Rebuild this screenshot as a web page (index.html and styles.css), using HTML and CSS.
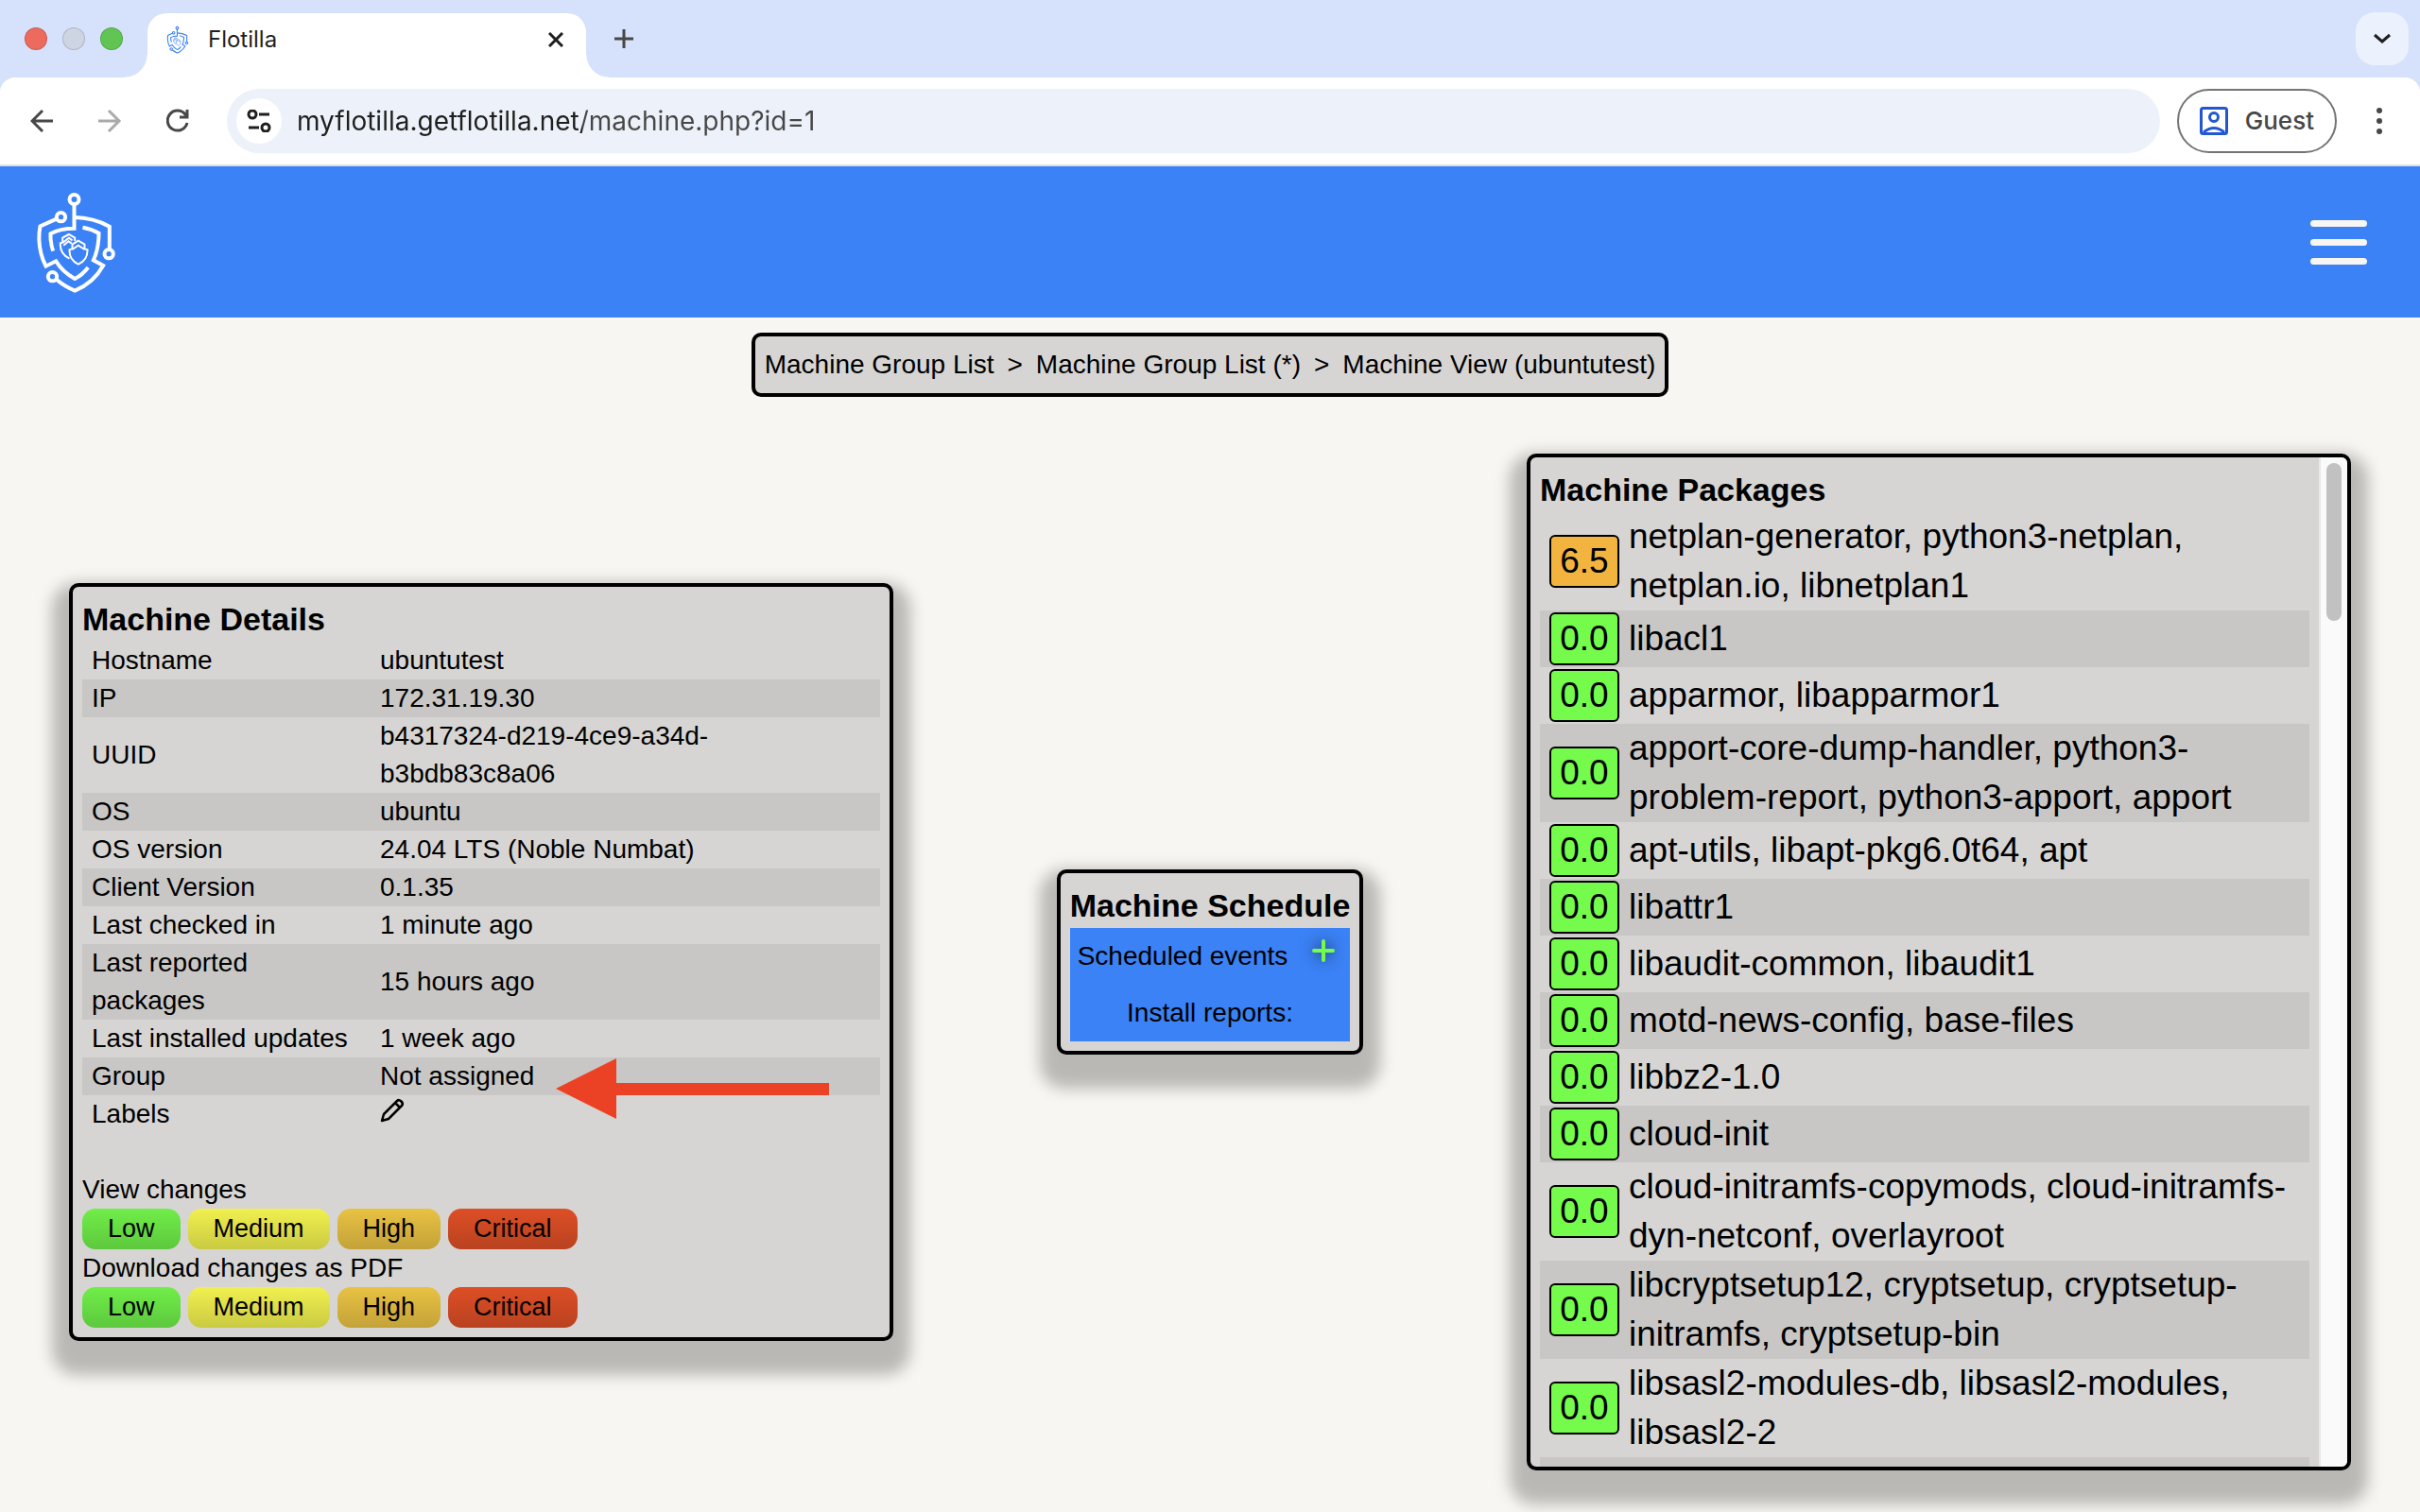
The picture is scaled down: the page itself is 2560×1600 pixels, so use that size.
FILE: index.html
```html
<!DOCTYPE html>
<html lang="en">
<head>
<meta charset="utf-8">
<title>Flotilla</title>
<link rel="stylesheet" href="styles.css">
</head>
<body>
<svg class="symbols" aria-hidden="true">
  <symbol id="shield" viewBox="50 60 260 330">
    <g fill="none" stroke="currentColor" stroke-width="12" stroke-linejoin="miter">
      <circle cx="174" cy="90" r="15"/>
      <circle cx="132" cy="146" r="14"/>
      <circle cx="284" cy="263" r="14"/>
      <circle cx="105" cy="335" r="14"/>
      <path d="M174 105V182Q130 182 99 199Q98 228 107 254"/>
      <path d="M118 152L66 175Q54 242 84 302L116 286Q136 320 176 342Q200 330 218 306"/>
      <path d="M174 147Q236 148 286 176V249"/>
      <path d="M201 179Q230 184 252 197Q252 246 235 283L266 300Q236 355 176 380Q142 366 116 343"/>
    </g>
    <g fill="none" stroke="currentColor" stroke-width="6">
      <path d="M159 278Q128 262 130 229L137 227V212L157 201L176 212V222M137 228L157 212L168 220M140 236L156 223L166 230"/>
      <path d="M187 296Q158 283 159 250L168 247V233L187 221L207 233V247L216 250Q217 283 187 296ZM168 249L187 236L207 249"/>
    </g>
  </symbol>
</svg>

<div class="tabstrip">
  <div class="lights"><span class="light red"></span><span class="light grey"></span><span class="light green"></span></div>
  <div class="tab">
    <svg class="favicon" aria-hidden="true"><use href="#shield"/></svg>
    <span class="tab-title">Flotilla</span>
    <button class="plain" type="button" aria-label="Close tab"><svg width="16" height="16" viewBox="0 0 16 16"><path d="M1 1L15 15M15 1L1 15" stroke="#1f1f1f" stroke-width="3"/></svg></button>
  </div>
  <button class="plain new-tab" type="button" aria-label="New tab"><svg width="20" height="20" viewBox="0 0 20 20"><path d="M10 0V20M0 10H20" stroke="#474747" stroke-width="3"/></svg></button>
  <button class="plain tab-search" type="button" aria-label="Search tabs"><svg width="18" height="12" viewBox="0 0 18 12"><path d="M1 2L9 9L17 2" fill="none" stroke="#1f1f1f" stroke-width="3"/></svg></button>
</div>

<div class="toolbar">
  <div class="nav">
    <button class="plain" type="button" aria-label="Back"><svg width="26" height="26" viewBox="0 0 26 26"><path d="M24 13H2M13 2L2 13L13 24" fill="none" stroke="#474747" stroke-width="3"/></svg></button>
    <button class="plain" type="button" aria-label="Forward"><svg width="26" height="26" viewBox="0 0 26 26"><path d="M0 13H22M11 2L22 13L11 24" fill="none" stroke="#aaaaaa" stroke-width="3"/></svg></button>
    <button class="plain" type="button" aria-label="Reload"><svg width="26" height="26" viewBox="0 0 26 26"><path d="M22 15A10.500 10.500 0 1 1 20 6L22 8M22 1V9H14" fill="none" stroke="#474747" stroke-width="3"/></svg></button>
  </div>
  <div class="omnibox">
    <button class="plain site-info" type="button" aria-label="Site information"><svg width="26" height="24" viewBox="0 0 26 24"><g fill="none" stroke="#1f1f1f" stroke-width="3"><circle cx="6" cy="5" r="4"/><path d="M13 5H24M2 19H13"/><circle cx="20" cy="19" r="4"/></g></svg></button>
    <input class="url" type="text" aria-label="Address" value="myflotilla.getflotilla.net/machine.php?id=1">
  </div>
  <button class="guest" type="button"><svg width="30" height="30" viewBox="0 0 30 30"><g fill="none" stroke="#2257d0" stroke-width="3"><rect x="1.500" y="1.500" width="27" height="27" rx="2"/><circle cx="15" cy="11" r="4.500"/><path d="M4 27Q15 18 26 27"/></g></svg><span>Guest</span></button>
  <button class="plain menu" type="button" aria-label="Menu"><svg width="6" height="28" viewBox="0 0 6 28"><g fill="#474747"><circle cx="3" cy="3" r="3"/><circle cx="3" cy="14" r="3"/><circle cx="3" cy="25" r="3"/></g></svg></button>
</div>

<header class="site-header">
  <a href="#" aria-label="Flotilla home"><svg class="logo" aria-hidden="true"><use href="#shield"/></svg></a>
  <button class="plain burger" type="button" aria-label="Open menu"><span></span><span></span><span></span></button>
</header>

<nav class="breadcrumb" aria-label="Breadcrumb">
  <a href="#">Machine Group List</a><span>&gt;</span><a href="#">Machine Group List (*)</a><span>&gt;</span><a href="#">Machine View (ubuntutest)</a>
</nav>

<main class="cards">
  <section class="card details">
    <h2>Machine Details</h2>
    <table class="facts">
      <tr><th scope="row">Hostname</th><td>ubuntutest</td></tr>
      <tr><th scope="row">IP</th><td>172.31.19.30</td></tr>
      <tr><th scope="row">UUID</th><td>b4317324-d219-4ce9-a34d-b3bdb83c8a06</td></tr>
      <tr><th scope="row">OS</th><td>ubuntu</td></tr>
      <tr><th scope="row">OS version</th><td>24.04 LTS (Noble Numbat)</td></tr>
      <tr><th scope="row">Client Version</th><td>0.1.35</td></tr>
      <tr><th scope="row">Last checked in</th><td>1 minute ago</td></tr>
      <tr><th scope="row">Last reported packages</th><td>15 hours ago</td></tr>
      <tr><th scope="row">Last installed updates</th><td>1 week ago</td></tr>
      <tr><th scope="row">Group</th><td class="pointed">Not assigned<svg class="arrow" width="289" height="66" viewBox="0 0 289 66" aria-hidden="true"><path d="M0 33L64 1V27H289V40H64V65Z" fill="#eb4226"/></svg></td></tr>
      <tr><th scope="row">Labels</th><td><button class="plain edit" type="button" aria-label="Edit labels"><svg width="26" height="26" viewBox="0 0 26 26"><path d="M2 24L4 17L18 3Q20 1 22.500 3.500Q25 6 23 8L9 22ZM16 5L21 10" fill="none" stroke="#000" stroke-width="2.500" stroke-linejoin="round"/></svg></button></td></tr>
    </table>
    <p class="changes">View changes</p>
    <div class="levels">
      <button class="low" type="button">Low</button><button class="medium" type="button">Medium</button><button class="high" type="button">High</button><button class="critical" type="button">Critical</button>
    </div>
    <p>Download changes as PDF</p>
    <div class="levels">
      <button class="low" type="button">Low</button><button class="medium" type="button">Medium</button><button class="high" type="button">High</button><button class="critical" type="button">Critical</button>
    </div>
  </section>

  <section class="card schedule">
    <h2>Machine Schedule</h2>
    <div class="schedule-body">
      <div class="events"><span>Scheduled events</span><button class="plain add" type="button" aria-label="Add scheduled event"><svg width="24" height="24" viewBox="0 0 24 24"><path d="M12 2V22M2 12H22" stroke="#75fb4c" stroke-width="4" stroke-linecap="round"/></svg></button></div>
      <div class="reports">Install reports:</div>
    </div>
  </section>

  <section class="card packages">
    <div class="scroll-area">
      <h2>Machine Packages</h2>
      <table class="package-list">
        <tr><td><span class="score warn">6.5</span></td><td>netplan-generator, python3-netplan, netplan.io, libnetplan1</td></tr>
        <tr><td><span class="score">0.0</span></td><td>libacl1</td></tr>
        <tr><td><span class="score">0.0</span></td><td>apparmor, libapparmor1</td></tr>
        <tr><td><span class="score">0.0</span></td><td>apport-core-dump-handler, python3-problem-report, python3-apport, apport</td></tr>
        <tr><td><span class="score">0.0</span></td><td>apt-utils, libapt-pkg6.0t64, apt</td></tr>
        <tr><td><span class="score">0.0</span></td><td>libattr1</td></tr>
        <tr><td><span class="score">0.0</span></td><td>libaudit-common, libaudit1</td></tr>
        <tr><td><span class="score">0.0</span></td><td>motd-news-config, base-files</td></tr>
        <tr><td><span class="score">0.0</span></td><td>libbz2-1.0</td></tr>
        <tr><td><span class="score">0.0</span></td><td>cloud-init</td></tr>
        <tr><td><span class="score">0.0</span></td><td>cloud-initramfs-copymods, cloud-initramfs-dyn-netconf, overlayroot</td></tr>
        <tr><td><span class="score">0.0</span></td><td>libcryptsetup12, cryptsetup, cryptsetup-initramfs, cryptsetup-bin</td></tr>
        <tr><td><span class="score">0.0</span></td><td>libsasl2-modules-db, libsasl2-modules, libsasl2-2</td></tr>
        <tr class="next"><td></td><td></td></tr>
      </table>
    </div>
    <div class="scrollbar" aria-hidden="true"><div class="thumb"></div></div>
  </section>
</main>
</body>
</html>
```
FILE: styles.css
```css
* { box-sizing: border-box; }

body {
  margin: 0;
  background: #f7f6f2;
  color: #000;
  font: 28px/40px "Liberation Sans", Arial, sans-serif;
}

button, input { font: inherit; color: inherit; }
h2, p { margin: 0; }
svg { display: block; }
a { color: inherit; text-decoration: none; }

.symbols { position: absolute; width: 0; height: 0; }

.plain {
  display: flex;
  align-items: center;
  justify-content: center;
  padding: 0;
  border: 0;
  background: none;
}

/* Browser frame */
.tabstrip {
  display: flex;
  align-items: center;
  height: 82px;
  padding: 0 12px 0 26px;
  background: #d6e1fb;
}

.lights { display: flex; gap: 16px; width: 130px; }
.light { width: 24px; height: 24px; border-radius: 50%; border: 1px solid rgba(0, 0, 0, 0.15); }
.red { background: #ec6b5e; }
.grey { background: #ced5e2; }
.green { background: #61c554; }

.tab {
  position: relative;
  display: flex;
  align-items: center;
  align-self: flex-end;
  width: 464px;
  height: 68px;
  padding: 0 24px 12px 20px;
  border-radius: 20px 20px 0 0;
  background: #fff;
}

.tab::before, .tab::after {
  content: "";
  position: absolute;
  bottom: 0;
  width: 24px;
  height: 24px;
}
.tab::before { right: 100%; background: radial-gradient(circle at 0 0, transparent 23px, #fff 24px); }
.tab::after { left: 100%; background: radial-gradient(circle at 100% 0, transparent 23px, #fff 24px); }

.favicon { width: 24px; height: 30px; color: #3b82f6; }
.tab-title { flex: 1; padding-left: 20px; font: 24px/32px Inter, sans-serif; color: #1f1f1f; }
.new-tab { margin-left: 30px; }
.tab-search { width: 56px; height: 56px; margin-left: auto; border-radius: 20px; background: #ebf2fd; }

.toolbar {
  display: flex;
  align-items: center;
  height: 94px;
  padding: 0 40px 0 32px;
  border-bottom: 2px solid #e0e0e0;
  background: linear-gradient(#fff, #fff) padding-box;
  border-radius: 16px 16px 0 0;
  box-shadow: 0 -16px 0 #d6e1fb;
}

.nav { display: flex; gap: 46px; width: 208px; }

.omnibox {
  display: flex;
  flex: 1;
  align-items: center;
  height: 68px;
  padding: 0 10px;
  border-radius: 34px;
  background: #edf2fa;
}

.site-info { width: 48px; height: 48px; border-radius: 50%; background: #fff; }

.url {
  flex: 1;
  height: 48px;
  padding: 0 0 0 16px;
  border: 0;
  outline: 0;
  font: 28px/40px Inter, sans-serif;
  color: #1f1f1f;
  background: linear-gradient(90deg, #1f1f1f 318px, #474747 318px);
  -webkit-background-clip: text;
  background-clip: text;
  -webkit-text-fill-color: transparent;
}

.guest {
  display: flex;
  align-items: center;
  gap: 18px;
  height: 68px;
  margin-left: 18px;
  padding: 0 22px;
  border: 2px solid #747474;
  border-radius: 34px;
  background: #fff;
  font: 500 26px/40px Inter, sans-serif;
  color: #474747;
}

.menu { margin-left: 42px; }

/* Site */
.site-header {
  display: flex;
  align-items: center;
  justify-content: space-between;
  height: 160px;
  padding: 0 56px 0 37px;
  background: #3b82f6;
  color: #fff;
}

.logo { width: 87px; height: 110px; }
.burger { flex-direction: column; gap: 13px; width: 60px; }
.burger span { width: 60px; height: 7px; border-radius: 4px; background: #f7f6f2; }

.breadcrumb {
  display: flex;
  justify-content: center;
  gap: 14px;
  width: fit-content;
  margin: 16px auto 60px;
  padding: 10px;
  border: 4px solid #000;
  border-radius: 10px;
  background: #d6d5d3;
}

.cards {
  display: flex;
  align-items: center;
  justify-content: space-between;
  padding: 0 73px 44px;
}

.card {
  padding: 10px;
  border: 4px solid #000;
  border-radius: 10px;
  background: #d6d5d3;
  box-shadow: 0 18px 16px 18px rgba(0, 0, 0, 0.25);
}

.card h2 { font-size: 34px; line-height: 48px; }

table { width: 100%; border-collapse: collapse; }
tr:nth-child(even) { background: #c8c7c5; }

.details, .packages { flex: 0 1 872px; }

.facts th, .facts td { padding: 0 10px; text-align: left; font-weight: normal; }
.facts th { width: 305px; }
.facts .pointed { position: relative; }
.arrow { position: absolute; left: 196px; top: 0; pointer-events: none; }
.edit { height: 40px; padding-bottom: 8px; }

.changes { margin-top: 40px; }
.levels { display: flex; gap: 8px; }
.levels button {
  height: 43px;
  padding: 0 27px;
  border: 0;
  border-radius: 14px;
  font-size: 27px;
  line-height: 43px;
}
.low { background: linear-gradient(#70ee49, #5dc83d); }
.medium { background: linear-gradient(#f1f04f, #caca42); }
.high { background: linear-gradient(#e8c243, #c3a238); }
.critical { background: linear-gradient(#dd4f26, #b94220); }

.schedule-body { background: #3b82f6; line-height: 60px; }
.events { display: flex; justify-content: space-between; padding: 0 16px 0 8px; }
.reports { text-align: center; }
.add { height: 48px; filter: drop-shadow(0 0 8px rgba(0, 0, 0, 0.7)); }

.packages {
  display: flex;
  height: calc(100vh - 524px);
  min-height: 400px;
  padding: 0;
  overflow: hidden;
}

.scroll-area { flex: 1; padding: 10px; overflow: hidden; }
.scrollbar { width: 30px; padding: 6px; border-left: 2px solid #e8e8e8; background: #fafafa; }
.thumb { width: 16px; height: 167px; border-radius: 8px; background: #c1c1c1; }

.package-list { font-size: 37px; line-height: 52px; }
.package-list td { padding: 0; }
.package-list td:first-child { width: 94px; padding: 2px 10px; }
.package-list .next { height: 60px; }

.score {
  display: block;
  width: 74px;
  border: 2px solid #000;
  border-radius: 6px;
  background: #75fb4c;
  text-align: center;
}
.warn { background: #f3b43f; }
```
